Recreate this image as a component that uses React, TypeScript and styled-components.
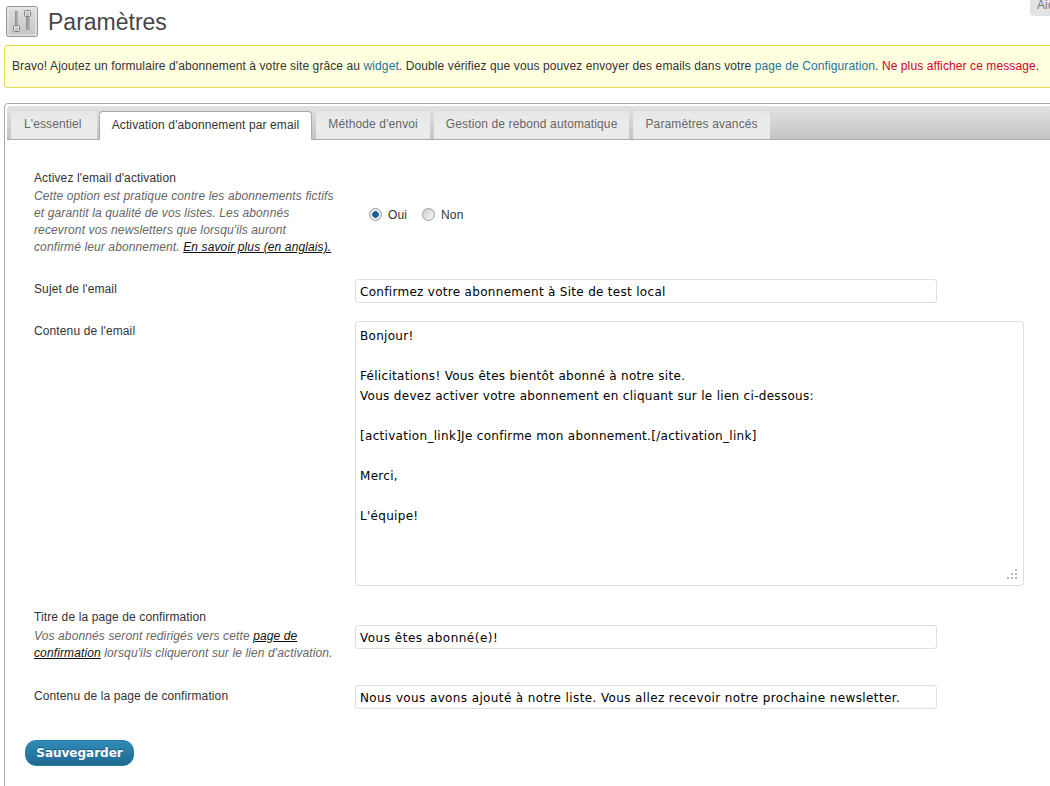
import React from 'react';
import styled, { createGlobalStyle } from 'styled-components';

const GlobalStyle = createGlobalStyle`
  html, body {
    margin: 0;
    padding: 0;
    background: #fff;
    overflow: hidden;
  }
  body {
    font-family: 'Liberation Sans', Arial, sans-serif;
    font-size: 12px;
    letter-spacing: 0.12px;
    color: #333;
  }
`;

const TABS = [
  "L'essentiel",
  "Activation d'abonnement par email",
  "Méthode d'envoi",
  'Gestion de rebond automatique',
  'Paramètres avancés',
];

const Page = styled.div`
  position: relative;
  width: 1050px;
  height: 786px;
  overflow: hidden;
  padding: 7px 0 0 4px;
  box-sizing: border-box;
`;

const HelpTab = styled.div`
  position: absolute;
  top: 0;
  right: 0;
  width: 20px;
  height: 16px;
  padding-left: 7px;
  box-sizing: border-box;
  overflow: hidden;
  background: #e3e3e3;
  border-radius: 0 0 0 4px;
  color: #777;
  font-size: 12px;
  line-height: 11px;
`;

const Header = styled.div`
  display: flex;
  align-items: center;
  gap: 10px;
  height: 30px;
  padding-left: 2px;
`;

const Title = styled.h2`
  margin: 0;
  font-size: 23px;
  font-weight: 400;
  letter-spacing: 0;
  line-height: 30px;
  color: #464646;
`;

const Notice = styled.div`
  margin-top: 8px;
  width: 1060px;
  height: 43px;
  box-sizing: border-box;
  padding-left: 7px;
  background: #ffffe0;
  border: 1px solid #e6db55;
  border-radius: 3px;
  letter-spacing: 0.1px;
  line-height: 41px;
  color: #333;
  white-space: nowrap;
`;

const NoticeLink = styled.a<{ $danger?: boolean }>`
  color: ${props => (props.$danger ? '#d0002f' : '#21759b')};
`;

const Panel = styled.div`
  margin-top: 15px;
  width: 1060px;
  box-sizing: border-box;
  height: 700px;
  padding: 2px;
  border: 1px solid #aaa;
  border-radius: 4px 0 0 4px;
`;

const TabBar = styled.div`
  display: flex;
  align-items: flex-end;
  gap: 4px;
  height: 33px;
  padding-left: 4px;
  border-bottom: 1px solid #aaa;
  border-radius: 3px 0 0 0;
  background: linear-gradient(#e2e2e2, #c4c4c4);
`;

const Tab = styled.div<{ $active?: boolean }>`
  height: ${props => (props.$active ? '29px' : '28px')};
  margin-bottom: ${props => (props.$active ? '-1px' : '0')};
  margin-left: ${props => (props.$active ? '-2px' : '0')};
  box-sizing: border-box;
  padding: 0 12px;
  line-height: 27px;
  white-space: nowrap;
  border-radius: 4px 4px 0 0;
  color: ${props => (props.$active ? '#333' : '#666')};
  background: ${props =>
    props.$active ? '#fff' : 'linear-gradient(#e6e6e6, #ececec 50%, #e9e9e9)'};
  border: ${props => (props.$active ? '1px solid #aaa' : '0')};
  border-bottom: ${props => (props.$active ? '1px solid #fff' : '0')};
  &:first-child {
    padding: 0 15px 0 13px;
  }
`;

const Form = styled.div`
  padding: 30px 0 0 27px;
  display: flex;
  flex-direction: column;
`;

const Row = styled.div<{ $center?: boolean; $gap: number }>`
  display: grid;
  grid-template-columns: 321px 1fr;
  align-items: ${props => (props.$center ? 'center' : 'start')};
  margin-bottom: ${props => props.$gap}px;
`;

const LabelBlock = styled.div<{ $top?: number; $bottom?: number }>`
  line-height: 17px;
  padding-top: ${props => props.$top || 0}px;
  padding-bottom: ${props => props.$bottom || 0}px;
`;

const Label = styled.div`
  color: #333;
`;

const Description = styled.div<{ $offset: number }>`
  color: #666;
  font-style: italic;
  width: 301px;
  margin-top: ${props => props.$offset}px;
`;

const DescLink = styled.a`
  color: #111;
  text-decoration: underline;
`;

const RadioGroup = styled.div`
  display: flex;
  align-items: center;
  padding-top: 3px;
`;

const Radio = styled.span<{ $checked?: boolean }>`
  width: 13px;
  height: 13px;
  box-sizing: border-box;
  border-radius: 50%;
  border: 1px solid #9a9a9a;
  background: ${props =>
    props.$checked
      ? 'radial-gradient(circle, #1f5f8f 0 3px, #dfe6ec 3.5px, #f4f4f4 100%)'
      : 'linear-gradient(135deg, #cfcfcf, #f8f8f8)'};
  margin: 0 6px 0 ${props => (props.$checked ? '14px' : '15px')};
`;

const RadioText = styled.span`
  color: #333;
`;

const TextInput = styled.div<{ $tracking?: number }>`
  width: 582px;
  height: 24px;
  box-sizing: border-box;
  padding: 1px 0 0 4px;
  border: 1px solid #dfdfdf;
  border-radius: 3px;
  font-family: 'DejaVu Sans', Verdana, sans-serif;
  font-size: 12px;
  letter-spacing: ${props => props.$tracking ?? 0.3}px;
  line-height: 22px;
  color: #000;
  white-space: nowrap;
`;

const TextArea = styled.div`
  position: relative;
  width: 669px;
  height: 265px;
  box-sizing: border-box;
  padding: 4px 4px;
  border: 1px solid #dfdfdf;
  border-radius: 3px;
  font-family: 'DejaVu Sans', Verdana, sans-serif;
  font-size: 12px;
  letter-spacing: 0.3px;
  line-height: 20px;
  color: #000;
  white-space: pre;
`;

const ResizeGrip = styled.svg`
  position: absolute;
  right: 5px;
  bottom: 5px;
`;

const SaveButton = styled.button`
  display: block;
  width: 109px;
  height: 26px;
  margin-left: -9px;
  padding: 0;
  border: 1px solid #2a7ea6;
  border-radius: 11px;
  background: linear-gradient(#2f8cb8, #21688f);
  color: #fff;
  font-family: 'DejaVu Sans', Verdana, sans-serif;
  font-size: 12px;
  font-weight: 700;
  text-shadow: 0 -1px 0 rgba(0, 0, 0, 0.3);
`;

const SettingsIcon = () => (
  <svg width="32" height="32" viewBox="0 0 32 32">
    <defs>
      <linearGradient id="ig" x1="0" y1="0" x2="0" y2="1">
        <stop offset="0" stopColor="#e0e0e0" />
        <stop offset="1" stopColor="#c4c4c4" />
      </linearGradient>
      <linearGradient id="tr" x1="0" y1="0" x2="1" y2="0">
        <stop offset="0" stopColor="#8e8e8e" />
        <stop offset="1" stopColor="#b8b8b8" />
      </linearGradient>
    </defs>
    <rect x="0.5" y="0.5" width="31" height="30" rx="2" fill="url(#ig)" stroke="#979797" />
    <rect x="2" y="2" width="28" height="27" fill="none" stroke="#eeeeee" />
    <rect x="9" y="5" width="3" height="14" fill="url(#tr)" />
    <rect x="20" y="11" width="4" height="13" fill="url(#tr)" />
    <rect x="7.5" y="19.5" width="6" height="6" rx="1" fill="#e4e4e4" stroke="#808080" />
    <rect x="18.5" y="4.5" width="6" height="6" rx="1" fill="#e4e4e4" stroke="#808080" />
    <path d="M9 22h3M9 24h3M20 7h3M20 9h3" stroke="#a0a0a0" fill="none" />
  </svg>
);

const EMAIL_BODY = `Bonjour!

Félicitations! Vous êtes bientôt abonné à notre site.
Vous devez activer votre abonnement en cliquant sur le lien ci-dessous:

[activation_link]Je confirme mon abonnement.[/activation_link]

Merci,

L'équipe!`;

const App = () => {
  return (
    <Page>
      <GlobalStyle />
      <HelpTab>Aide</HelpTab>
      <Header>
        <SettingsIcon />
        <Title>Paramètres</Title>
      </Header>
      <Notice>
        Bravo! Ajoutez un formulaire d'abonnement à votre site grâce au{' '}
        <NoticeLink>widget</NoticeLink>. Double vérifiez que vous pouvez envoyer des emails dans
        votre <NoticeLink>page de Configuration</NoticeLink>.{' '}
        <NoticeLink $danger>Ne plus afficher ce message</NoticeLink>.
      </Notice>
      <Panel>
        <TabBar>
          {TABS.map((tab, index) => (
            <Tab key={tab} $active={index === 1}>
              {tab}
            </Tab>
          ))}
        </TabBar>
        <Form>
          <Row $center $gap={23}>
            <LabelBlock>
              <Label>Activez l'email d'activation</Label>
              <Description $offset={1}>
                Cette option est pratique contre les abonnements fictifs et garantit la qualité de
                vos listes. Les abonnés recevront vos newsletters que lorsqu'ils auront confirmé
                leur abonnement. <DescLink>En savoir plus (en anglais).</DescLink>
              </Description>
            </LabelBlock>
            <RadioGroup>
              <Radio $checked />
              <RadioText>Oui</RadioText>
              <Radio />
              <RadioText>Non</RadioText>
            </RadioGroup>
          </Row>
          <Row $gap={18}>
            <LabelBlock $top={2}>
              <Label>Sujet de l'email</Label>
            </LabelBlock>
            <TextInput>Confirmez votre abonnement à Site de test local</TextInput>
          </Row>
          <Row $gap={22}>
            <LabelBlock $top={2}>
              <Label>Contenu de l'email</Label>
            </LabelBlock>
            <TextArea>
              {EMAIL_BODY}
              <ResizeGrip width="11" height="11" viewBox="0 0 11 11">
                <path
                  d="M8 0h2v2H8zM8 4h2v2H8zM4 4h2v2H4zM8 8h2v2H8zM4 8h2v2H4zM0 8h2v2H0z"
                  fill="#b5b5b5"
                />
              </ResizeGrip>
            </TextArea>
          </Row>
          <Row $center $gap={19}>
            <LabelBlock $top={1} $bottom={4}>
              <Label>Titre de la page de confirmation</Label>
              <Description $offset={2}>
                Vos abonnés seront redirigés vers cette <DescLink>page de confirmation</DescLink>{' '}
                lorsqu'ils cliqueront sur le lien d'activation.
              </Description>
            </LabelBlock>
            <TextInput $tracking={0.5}>Vous êtes abonné(e)!</TextInput>
          </Row>
          <Row $gap={31}>
            <LabelBlock $top={3}>
              <Label>Contenu de la page de confirmation</Label>
            </LabelBlock>
            <TextInput $tracking={0.38}>
              Nous vous avons ajouté à notre liste. Vous allez recevoir notre prochaine newsletter.
            </TextInput>
          </Row>
          <SaveButton>Sauvegarder</SaveButton>
        </Form>
      </Panel>
    </Page>
  );
};

export default App;
